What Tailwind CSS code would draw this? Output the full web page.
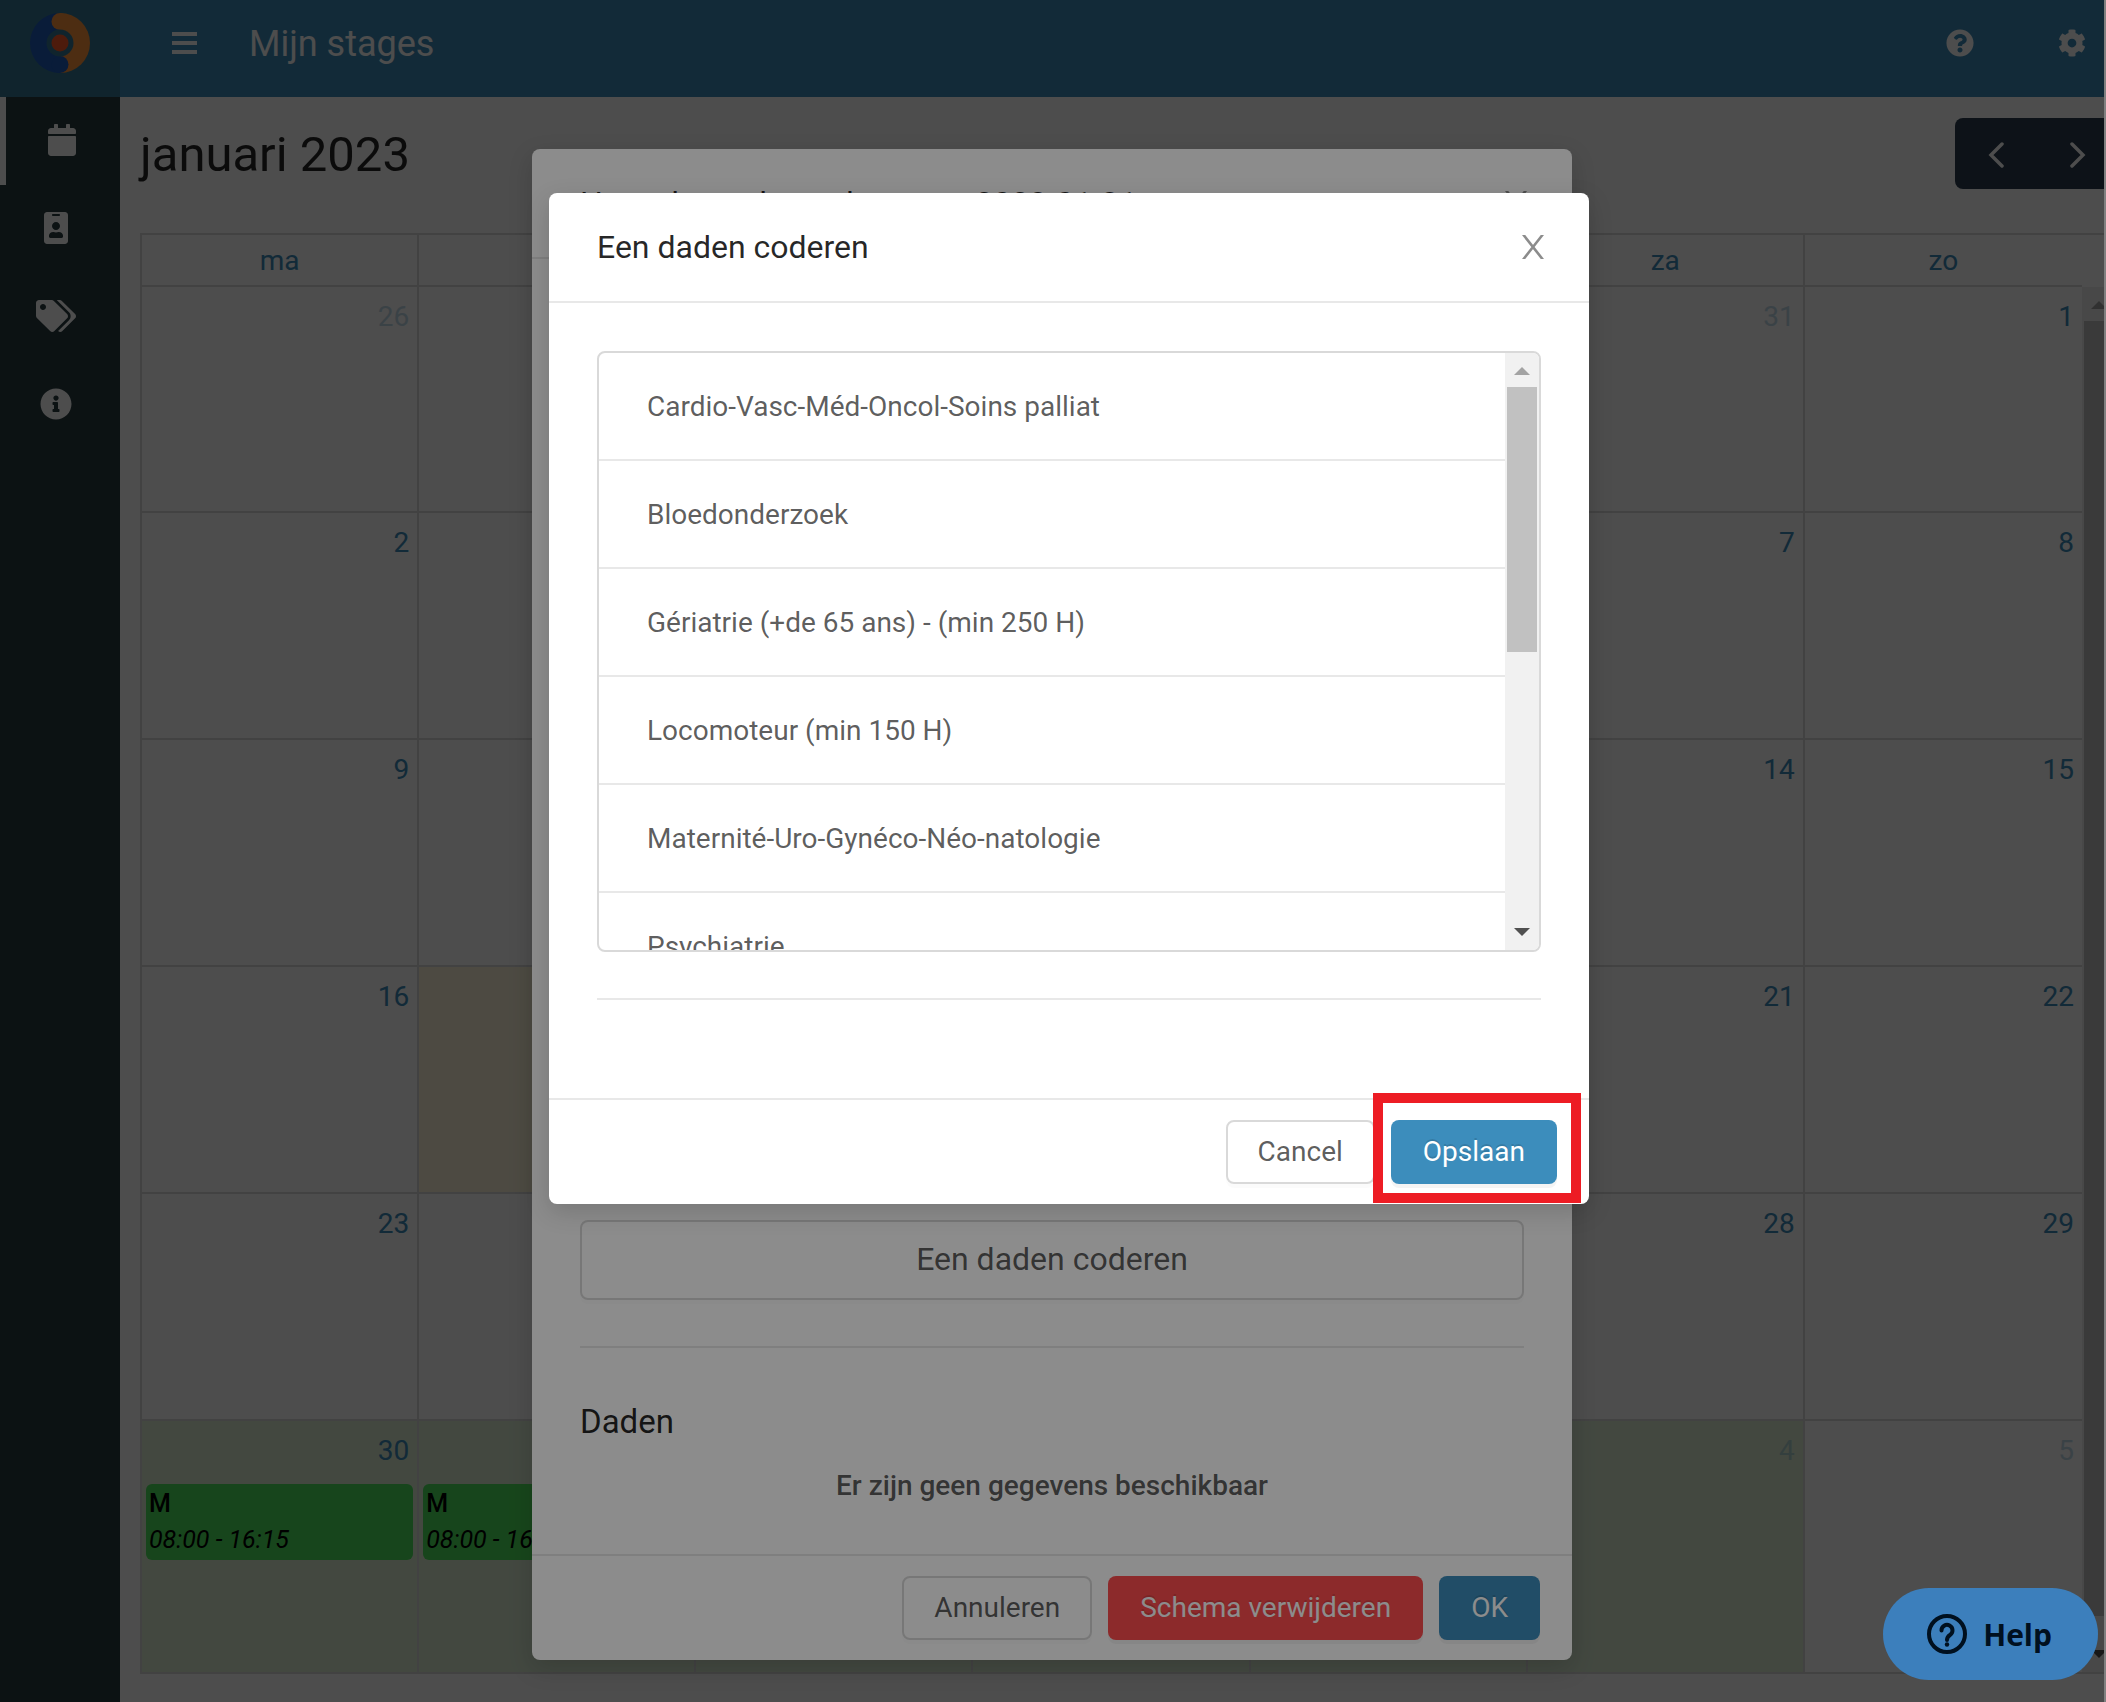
<!DOCTYPE html>
<html lang="nl">
<head>
    <meta charset="UTF-8">
    <title>Mijn stages</title>
    <script src="https://cdn.jsdelivr.net/npm/@tailwindcss/browser@4"></script>
</head>
<body class="bg-[#808080] font-['Roboto',sans-serif] text-[28px] leading-[42px] text-black/65">
    <div class="relative mr-0.5 h-screen overflow-hidden bg-white flex flex-col">

        <!-- top bar -->
        <header class="flex h-[97px] shrink-0 bg-[#3c8dbc] text-white">
            <a href="#" aria-label="Home" class="block w-[120px] bg-[#387b96]">
                <svg class="w-[120px] h-[86px]" viewBox="0 0 120 86">
                    <path d="M60 13a30 30 0 0 0 0 60z" fill="#1f5dc0"/>
                    <path d="M60 13a30 30 0 0 1 0 60z" fill="#ff963c"/>
                    <circle cx="60" cy="21.500" r="8.500" fill="#ff963c"/>
                    <circle cx="60" cy="64.500" r="8.500" fill="#1f5dc0"/>
                    <circle cx="60" cy="43" r="13.500" fill="#387b96"/>
                    <circle cx="60" cy="43" r="8.500" fill="#ff5c28"/>
                </svg>
            </a>
            <div class="flex flex-1 items-center h-[86px] pl-[52px] pr-[18px]">
                <button type="button" aria-label="Menu">
                    <svg class="block w-[25px] h-[22px]" viewBox="0 0 25 22" fill="currentColor">
                        <path d="M0 0h25v4H0zM0 9h25v4H0zM0 18h25v4H0z"/>
                    </svg>
                </button>
                <h1 class="ml-[52px] pt-0.5 text-[36px] leading-[54px]">Mijn stages</h1>
                <button type="button" aria-label="Vragen" class="ml-auto">
                    <svg class="block w-7 h-7" viewBox="0 0 512 512" fill="currentColor"><path d="M504 256c0 136.997-111.043 248-248 248S8 392.997 8 256C8 119.083 119.043 8 256 8s248 111.083 248 248zM262.655 90c-54.497 0-89.255 22.957-116.549 63.758-3.536 5.286-2.353 12.415 2.715 16.258l34.699 26.310c5.205 3.947 12.621 3.008 16.665-2.122 17.864-22.658 30.113-35.797 57.303-35.797 20.429 0 45.698 13.148 45.698 32.958 0 14.976-12.363 22.667-32.534 33.976C247.128 238.528 216 254.941 216 296v4c0 6.627 5.373 12 12 12h56c6.627 0 12-5.373 12-12v-1.333c0-28.462 83.186-29.647 83.186-106.667 0-58.002-60.165-102-116.531-102zM256 338c-25.365 0-46 20.635-46 46 0 25.364 20.635 46 46 46s46-20.636 46-46c0-25.365-20.635-46-46-46z"/></svg>
                </button>
                <button type="button" aria-label="Instellingen" class="ml-[84px]">
                    <svg class="block w-7 h-7" viewBox="0 0 512 512" fill="currentColor"><path d="M487.400 315.700l-42.600-24.600c4.300-23.200 4.300-47 0-70.200l42.600-24.600c4.900-2.800 7.100-8.600 5.500-14-11.100-35.600-30-67.800-54.700-94.600-3.800-4.100-10-5.100-14.800-2.300L380.800 110c-17.900-15.400-38.500-27.300-60.800-35.100V25.800c0-5.600-3.900-10.500-9.400-11.700-36.700-8.200-74.300-7.800-109.200 0-5.500 1.200-9.400 6.100-9.400 11.700V75c-22.200 7.900-42.800 19.800-60.800 35.100L88.700 85.500c-4.900-2.800-11-1.900-14.800 2.300-24.700 26.700-43.600 58.900-54.700 94.600-1.700 5.400.6 11.200 5.500 14L67.300 221c-4.300 23.200-4.300 47 0 70.200l-42.600 24.600c-4.900 2.800-7.100 8.600-5.500 14 11.100 35.600 30 67.800 54.700 94.600 3.800 4.100 10 5.100 14.800 2.300l42.600-24.600c17.900 15.400 38.500 27.300 60.800 35.100v49.200c0 5.600 3.900 10.500 9.400 11.700 36.700 8.200 74.300 7.800 109.200 0 5.500-1.200 9.400-6.100 9.400-11.700v-49.200c22.200-7.900 42.800-19.800 60.800-35.100l42.600 24.600c4.900 2.800 11 1.900 14.800-2.300 24.700-26.700 43.600-58.900 54.700-94.600 1.500-5.500-.7-11.300-5.600-14.100zM256 336c-44.100 0-80-35.900-80-80s35.900-80 80-80 80 35.900 80 80-35.900 80-80 80z"/></svg>
                </button>
            </div>
        </header>

        <div class="flex flex-1 min-h-0">
            <!-- sidebar -->
            <nav class="w-[120px] shrink-0 bg-[#293c41] text-white">
                <a href="#" aria-label="Kalender" class="flex items-center h-[88px] border-l-6 border-white pl-[42px] pb-0.5">
                    <svg class="w-7 h-8" viewBox="0 0 448 512" fill="currentColor"><path d="M12 192h424c6.600 0 12 5.400 12 12v260c0 26.500-21.500 48-48 48H48c-26.500 0-48-21.500-48-48V204c0-6.600 5.400-12 12-12zm436-44v-36c0-26.500-21.500-48-48-48h-48V12c0-6.600-5.400-12-12-12h-40c-6.600 0-12 5.400-12 12v52H160V12c0-6.600-5.400-12-12-12h-40c-6.600 0-12 5.400-12 12v52H48C21.500 64 0 85.500 0 112v36c0 6.600 5.400 12 12 12h424c6.600 0 12-5.400 12-12z"/></svg>
                </a>
                <a href="#" aria-label="Profiel" class="flex items-center justify-center h-[88px] pr-2 pb-0.5">
                    <svg class="w-6 h-8" viewBox="0 0 384 512" fill="currentColor"><path d="M336 0H48C21.500 0 0 21.500 0 48v416c0 26.500 21.500 48 48 48h288c26.500 0 48-21.500 48-48V48c0-26.500-21.500-48-48-48zM144 32h96c8.800 0 16 7.200 16 16s-7.200 16-16 16h-96c-8.800 0-16-7.200-16-16s7.200-16 16-16zm48 128c35.300 0 64 28.700 64 64s-28.700 64-64 64-64-28.700-64-64 28.700-64 64-64zm112 236.800c0 10.600-10 19.200-22.400 19.200H102.400C90 416 80 407.400 80 396.800v-19.200c0-31.800 30.100-57.600 67.200-57.600h5c12.300 5.100 25.700 8 39.800 8s27.600-2.900 39.800-8h5c37.100 0 67.200 25.800 67.200 57.600v19.200z"/></svg>
                </a>
                <a href="#" aria-label="Labels" class="flex items-center justify-center h-[88px] pr-2 pb-0.5">
                    <svg class="w-10 h-8" viewBox="0 0 640 512" fill="currentColor"><path d="M497.941 225.941L286.059 14.059A48 48 0 0 0 252.118 0H48C21.490 0 0 21.490 0 48v204.118a48 48 0 0 0 14.059 33.941l211.882 211.882c18.744 18.745 49.136 18.746 67.882 0l204.118-204.118c18.745-18.745 18.745-49.137 0-67.882zM112 160c-26.510 0-48-21.490-48-48s21.490-48 48-48 48 21.490 48 48-21.490 48-48 48zm513.941 133.823L421.823 497.941c-18.745 18.745-49.137 18.745-67.882 0l-.36-.36L527.640 323.522c16.999-16.999 26.362-39.600 26.362-63.640s-9.362-46.641-26.362-63.640L331.397 0h48.721a48 48 0 0 1 33.941 14.059l211.882 211.882c18.745 18.745 18.745 49.137 0 67.882z"/></svg>
                </a>
                <a href="#" aria-label="Info" class="flex items-center justify-center h-[88px] pr-2 pb-0.5">
                    <svg class="w-8 h-8" viewBox="0 0 512 512" fill="currentColor"><path d="M256 8C119.043 8 8 119.083 8 256c0 136.997 111.043 248 248 248s248-111.003 248-248C504 119.083 392.957 8 256 8zm0 110c23.196 0 42 18.804 42 42s-18.804 42-42 42-42-18.804-42-42 18.804-42 42-42zm56 254c0 6.627-5.373 12-12 12h-88c-6.627 0-12-5.373-12-12v-24c0-6.627 5.373-12 12-12h12v-64h-12c-6.627 0-12-5.373-12-12v-24c0-6.627 5.373-12 12-12h64c6.627 0 12 5.373 12 12v100h12c6.627 0 12 5.373 12 12v24z"/></svg>
                </a>
            </nav>

            <!-- calendar, a little wider than the window -->
            <main class="flex-1 min-w-0 pl-5 pt-[21px] -mr-[14px]">
                <div class="flex items-center justify-between h-[71px] mb-11">
                    <h2 class="pt-0.5 text-[49px] leading-[72px] text-black/85">januari 2023</h2>
                    <div class="flex h-[71px] rounded-lg bg-[#2c3e50] text-white">
                        <button type="button" aria-label="Vorige" class="w-[82px] pt-0.5 flex items-center justify-center">
                            <svg class="w-4 h-7" viewBox="0 0 16 28" fill="none" stroke="currentColor" stroke-width="3.500" stroke-linecap="round"><path d="M14 3L3 14l11 11"/></svg>
                        </button>
                        <button type="button" aria-label="Volgende" class="w-[81px] pt-0.5 flex items-center justify-center">
                            <svg class="w-4 h-7" viewBox="0 0 16 28" fill="none" stroke="currentColor" stroke-width="3.500" stroke-linecap="round"><path d="M2 3l11 11L2 25"/></svg>
                        </button>
                    </div>
                </div>

                <div class="border-2 border-[#ddd] text-[#3c8dbc]">
                    <div class="pr-[34px]">
                        <table class="w-full table-fixed border-separate border-spacing-0">
                            <thead>
                                <tr class="h-[52px] [&>th]:p-0 [&>th]:pt-0.5 [&>th]:font-normal [&>th]:border-b-2 [&>th]:border-[#ddd] [&>th:not(:last-child)]:border-r-2">
                                    <th>ma</th><th>di</th><th>wo</th><th>do</th><th>vr</th><th>za</th><th>zo</th>
                                </tr>
                            </thead>
                        </table>
                    </div>
                    <div class="flex">
                        <table class="flex-1 w-full table-fixed border-separate border-spacing-0 text-right [&_td]:pt-[9px] [&_td]:px-2 [&_td]:align-top [&_td]:border-[#ddd] [&_td:not(:last-child)]:border-r-2">
                            <tbody>
                                <tr class="h-[226px] [&>td]:border-b-2">
                                    <td><span class="opacity-30">26</span></td><td><span class="opacity-30">27</span></td><td><span class="opacity-30">28</span></td><td><span class="opacity-30">29</span></td><td><span class="opacity-30">30</span></td><td><span class="opacity-30">31</span></td><td>1</td>
                                </tr>
                                <tr class="h-[227px] [&>td]:border-b-2">
                                    <td>2</td><td>3</td><td>4</td><td>5</td><td>6</td><td>7</td><td>8</td>
                                </tr>
                                <tr class="h-[227px] [&>td]:border-b-2">
                                    <td>9</td><td>10</td><td>11</td><td>12</td><td>13</td><td>14</td><td>15</td>
                                </tr>
                                <tr class="h-[227px] [&>td]:border-b-2">
                                    <td>16</td><td class="bg-[#fff8dc]">17</td><td>18</td><td>19</td><td>20</td><td>21</td><td>22</td>
                                </tr>
                                <tr class="h-[227px] [&>td]:border-b-2">
                                    <td>23</td><td>24</td><td>25</td><td>26</td><td>27</td><td>28</td><td>29</td>
                                </tr>
                                <tr class="h-[251px]">
                                    <td class="bg-[#dff0d8]">30
                                        <div class="-mx-1 mt-3 h-[76px] rounded-md bg-[#4fe75d] pl-[3px] pt-0.5 text-left text-[25px] leading-[36px] text-black">
                                            <div class="font-medium">M</div>
                                            <div class="italic">08:00 - 16:15</div>
                                        </div>
                                    </td>
                                    <td class="bg-[#dff0d8]">31
                                        <div class="-mx-1 mt-3 h-[76px] rounded-md bg-[#4fe75d] pl-[3px] pt-0.5 text-left text-[25px] leading-[36px] text-black">
                                            <div class="font-medium">M</div>
                                            <div class="italic">08:00 - 16:15</div>
                                        </div>
                                    </td>
                                    <td class="bg-[#dff0d8]"><span class="opacity-30">1</span></td><td class="bg-[#dff0d8]"><span class="opacity-30">2</span></td><td class="bg-[#dff0d8]"><span class="opacity-30">3</span></td><td class="bg-[#dff0d8]"><span class="opacity-30">4</span></td><td><span class="opacity-30">5</span></td>
                                </tr>
                            </tbody>
                        </table>
                        <div class="flex flex-col items-center w-[34px] shrink-0 bg-[#f1f1f1]">
                            <svg class="w-4 h-[34px]" viewBox="0 0 16 34"><path d="M0 22L8 14l8 8z" fill="#a3a3a3"/></svg>
                            <div class="flex-1 w-[30px] bg-[#c1c1c1]"></div>
                            <svg class="w-4 h-[56px]" viewBox="0 0 16 56"><path d="M0 34l8 8 8-8z" fill="#505050"/></svg>
                        </div>
                    </div>
                </div>
            </main>
        </div>

        <!-- schedule dialog -->
        <div class="absolute inset-0 flex justify-center items-start pt-[149px] bg-black/45">
            <div role="dialog" aria-labelledby="scheduleTitle" class="w-[1040px] rounded-lg bg-white shadow-[0_8px_24px_rgba(0,0,0,0.15)]">
                <div class="flex items-center justify-between h-[110px] border-b-2 border-[#e8e8e8] px-12">
                    <h3 id="scheduleTitle" class="text-[32px] leading-[44px] text-black/85">Het schema bewerken voor 2023-01-31</h3>
                    <button type="button" aria-label="Sluiten" class="mr-[-3px] text-black/45">
                        <svg class="block w-[22px] h-6" viewBox="0 0 22 24" fill="none" stroke="currentColor" stroke-width="2.600"><path d="M0 -2l22 28M22 -2L0 26"/></svg>
                    </button>
                </div>
                <div class="flex flex-col justify-end min-h-[1295px] px-12 pb-[47px]">
                    <button type="button" class="h-20 rounded-lg border-2 border-[#d9d9d9] pb-0.5 text-[32px] shadow-[0_4px_0_rgba(0,0,0,0.015)]">Een daden coderen</button>
                    <hr class="my-[46px] border-t-2 border-[#e8e8e8]">
                    <h3 class="mt-[6px] text-[33px] leading-[44px] text-black/85">Daden</h3>
                    <p class="mt-[21px] text-center font-medium">Er zijn geen gegevens beschikbaar</p>
                </div>
                <div class="flex items-center justify-end gap-4 h-[106px] border-t-2 border-[#e8e8e8] px-8">
                    <button type="button" class="h-16 rounded-lg border-2 border-[#d9d9d9] px-[30px] shadow-[0_4px_0_rgba(0,0,0,0.015)]">Annuleren</button>
                    <button type="button" class="h-16 rounded-lg bg-[#ff4d4f] px-8 text-white shadow-[0_4px_0_rgba(0,0,0,0.045)] [text-shadow:0_-2px_0_rgba(0,0,0,0.12)]">Schema verwijderen</button>
                    <button type="button" class="h-16 rounded-lg bg-[#3c8dbc] px-8 text-white shadow-[0_4px_0_rgba(0,0,0,0.045)] [text-shadow:0_-2px_0_rgba(0,0,0,0.12)]">OK</button>
                </div>
            </div>
        </div>

        <!-- coding dialog -->
        <div class="absolute inset-0 flex justify-center items-start pt-[193px] pl-[34px] bg-black/45">
            <div role="dialog" aria-labelledby="codingTitle" class="w-[1040px] rounded-lg bg-white shadow-[0_8px_24px_rgba(0,0,0,0.15)]">
                <div class="flex items-center justify-between h-[110px] border-b-2 border-[#e8e8e8] px-12">
                    <h3 id="codingTitle" class="text-[32px] leading-[44px] text-black/85">Een daden coderen</h3>
                    <button type="button" aria-label="Sluiten" class="mr-[-3px] text-black/45">
                        <svg class="block w-[22px] h-6" viewBox="0 0 22 24" fill="none" stroke="currentColor" stroke-width="2.600"><path d="M0 -2l22 28M22 -2L0 26"/></svg>
                    </button>
                </div>
                <div class="px-12 pt-12 pb-[98px]">
                    <div class="flex h-[601px] overflow-hidden rounded-lg border-2 border-[#d9d9d9]">
                        <ul class="flex-1 [&>li]:flex [&>li]:items-center [&>li]:h-[108px] [&>li]:px-12 [&>li]:pt-0.5 [&>li]:border-b-2 [&>li]:border-[#e8e8e8]">
                            <li>Cardio-Vasc-Méd-Oncol-Soins palliat</li>
                            <li>Bloedonderzoek</li>
                            <li>Gériatrie (+de 65 ans) - (min 250 H)</li>
                            <li>Locomoteur (min 150 H)</li>
                            <li>Maternité-Uro-Gynéco-Néo-natologie</li>
                            <li>Psychiatrie</li>
                        </ul>
                        <div class="flex flex-col items-center w-[34px] bg-[#f1f1f1]">
                            <svg class="w-4 h-[34px]" viewBox="0 0 16 34"><path d="M0 22L8 14l8 8z" fill="#a3a3a3"/></svg>
                            <div class="w-[30px] h-[265px] bg-[#c1c1c1]"></div>
                            <svg class="mt-auto w-4 h-[34px]" viewBox="0 0 16 34"><path d="M0 12l8 8 8-8z" fill="#505050"/></svg>
                        </div>
                    </div>
                    <hr class="mt-[46px] border-t-2 border-[#e8e8e8]">
                </div>
                <div class="flex items-center justify-end gap-4 h-[106px] border-t-2 border-[#e8e8e8] px-8">
                    <button type="button" class="h-16 rounded-lg border-2 border-[#d9d9d9] px-[30px] shadow-[0_4px_0_rgba(0,0,0,0.015)]">Cancel</button>
                    <div class="relative">
                        <button type="button" class="block h-16 rounded-lg bg-[#3c8dbc] px-8 text-white shadow-[0_4px_0_rgba(0,0,0,0.045)] [text-shadow:0_-2px_0_rgba(0,0,0,0.12)]">Opslaan</button>
                        <!-- red marker round the save button -->
                        <div class="absolute -left-[18px] -right-6 -top-[27px] -bottom-[19px] border-10 border-[#ed1c24] pointer-events-none"></div>
                    </div>
                </div>
            </div>
        </div>

        <button type="button" class="absolute right-[6px] bottom-[22px] flex items-center h-[92px] pl-11 pr-[46px] gap-4 rounded-full bg-[#3c7fbc] font-['Open_Sans',sans-serif] text-[30px] leading-[40px] font-bold text-[#00101f]">
            <svg class="w-10 h-10" viewBox="0 0 40 40" fill="none" stroke="currentColor" stroke-width="4">
                <circle cx="20" cy="20" r="18"/>
                <path d="M14.500 16.500a5.500 5.500 0 1 1 8.500 4.500c-2 1.300-3 2.300-3 5" stroke-linecap="round"/>
                <circle cx="20" cy="30.500" r="2.200" fill="currentColor" stroke="none"/>
            </svg>
            <span class="pt-0.5">Help</span>
        </button>
    </div>
</body>
</html>
